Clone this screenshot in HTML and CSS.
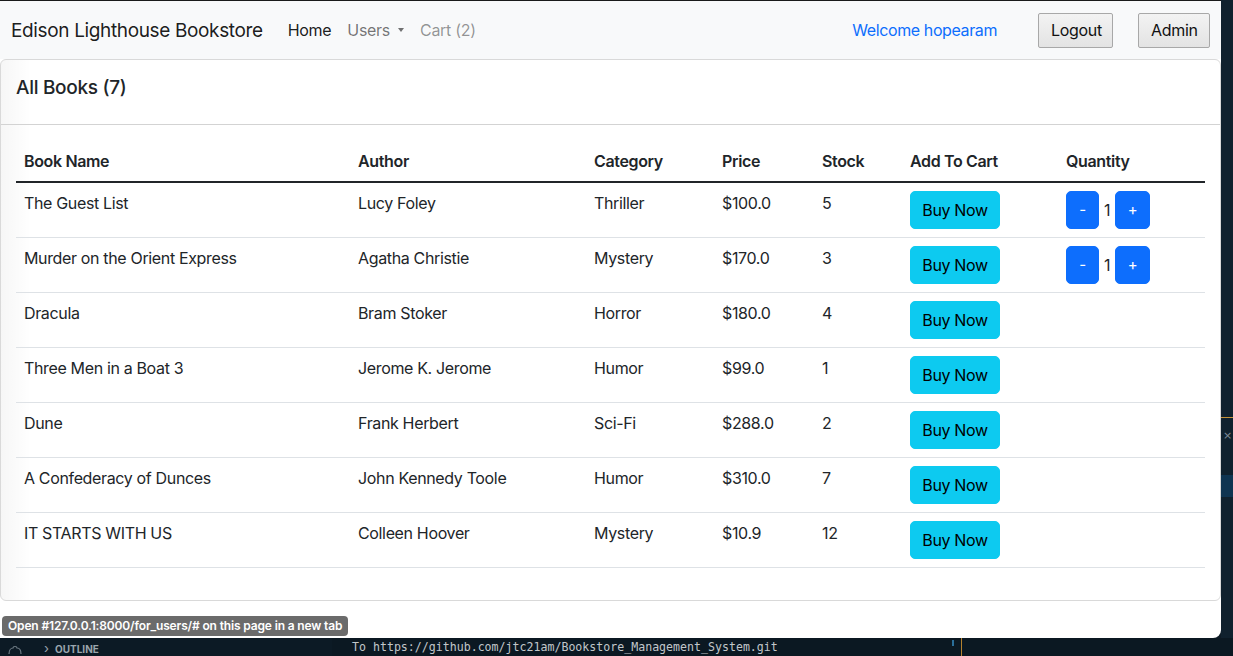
FILE: index.html
```html
<!DOCTYPE html>
<html lang="en">
<head>
<meta charset="utf-8">
<title>Edison Lighthouse Bookstore</title>
<link rel="stylesheet" href="styles.css">
</head>
<body>
<div class="screen">
  <div class="window">
    <nav class="navbar">
      <a class="brand" href="#">Edison Lighthouse Bookstore</a>
      <a class="nav-link active" href="#">Home</a>
      <a class="nav-link" href="#">Users<span class="caret"></span></a>
      <a class="nav-link disabled" href="#">Cart (2)</a>
      <div class="nav-right">
        <a class="welcome" href="#">Welcome hopearam</a>
        <button class="sys-btn logout">Logout</button>
        <button class="sys-btn admin">Admin</button>
      </div>
    </nav>
    <div class="card">
      <div class="card-header"><h5 class="card-title">All Books (7)</h5></div>
      <div class="card-body">
        <table class="table">
          <colgroup>
            <col class="c-name"><col class="c-author"><col class="c-cat"><col class="c-price"><col class="c-stock"><col class="c-cart"><col class="c-qty">
          </colgroup>
          <thead>
            <tr><th>Book Name</th><th>Author</th><th>Category</th><th>Price</th><th>Stock</th><th>Add To Cart</th><th>Quantity</th></tr>
          </thead>
          <tbody>
            <tr><td>The Guest List</td><td>Lucy Foley</td><td>Thriller</td><td>$100.0</td><td>5</td><td><button class="btn btn-info">Buy Now</button></td><td><button class="btn btn-primary">-</button><span class="qty">1</span><button class="btn btn-primary">+</button></td></tr>
            <tr><td>Murder on the Orient Express</td><td>Agatha Christie</td><td>Mystery</td><td>$170.0</td><td>3</td><td><button class="btn btn-info">Buy Now</button></td><td><button class="btn btn-primary">-</button><span class="qty">1</span><button class="btn btn-primary">+</button></td></tr>
            <tr><td>Dracula</td><td>Bram Stoker</td><td>Horror</td><td>$180.0</td><td>4</td><td><button class="btn btn-info">Buy Now</button></td><td></td></tr>
            <tr><td>Three Men in a Boat 3</td><td>Jerome K. Jerome</td><td>Humor</td><td>$99.0</td><td>1</td><td><button class="btn btn-info">Buy Now</button></td><td></td></tr>
            <tr><td>Dune</td><td>Frank Herbert</td><td>Sci-Fi</td><td>$288.0</td><td>2</td><td><button class="btn btn-info">Buy Now</button></td><td></td></tr>
            <tr><td>A Confederacy of Dunces</td><td>John Kennedy Toole</td><td>Humor</td><td>$310.0</td><td>7</td><td><button class="btn btn-info">Buy Now</button></td><td></td></tr>
            <tr><td>IT STARTS WITH US</td><td>Colleen Hoover</td><td>Mystery</td><td>$10.9</td><td>12</td><td><button class="btn btn-info">Buy Now</button></td><td></td></tr>
          </tbody>
        </table>
      </div>
    </div>
    <div class="status-tip">Open #127.0.0.1:8000/for_users/# on this page in a new tab</div>
  </div>
  <div class="side-strip">
    <div class="side-accent"></div>
    <div class="side-close">×</div>
    <div class="side-block"></div>
  </div>
  <div class="bottom-strip">
    <div class="outline-panel">
      <svg class="outline-icon" width="14" height="10" viewBox="0 0 14 10"><path d="M1 9 C1 5 3 3 5 3 C5 1 9 1 9 3 C11 3 13 5 13 9" fill="none" stroke="#6f7c86" stroke-width="1.2"/></svg>
      <span class="chev">›</span>
      <span class="outline-label">OUTLINE</span>
    </div>
    <div class="terminal">
      <span class="term-text">To https://github.com/jtc21am/Bookstore_Management_System.git</span>
      <span class="term-tick"></span>
      <span class="term-line"></span>
    </div>
  </div>
</div>
</body>
</html>
```

FILE: styles.css
```css
* { box-sizing: border-box; }

body {
  margin: 0;
  background: #0e1b26;
  font-family: Inter, "Noto Sans", sans-serif;
  color: #212529;
}

.screen {
  display: grid;
  grid-template-columns: 1221px 12px;
  grid-template-rows: 638px 18px;
  width: 1233px;
  height: 656px;
  overflow: hidden;
}

.window {
  position: relative;
  background: #fff;
  border-bottom-right-radius: 8px;
  overflow: hidden;
}

/* Navbar */
.navbar {
  height: 59px;
  background: #f8f9fa;
  border-top: 1px solid #1a1a1a;
  display: flex;
  align-items: center;
  padding: 0 11px;
}

.navbar a { text-decoration: none; }

.brand {
  font-size: 19px;
  letter-spacing: -0.36px;
  color: rgba(0, 0, 0, 0.9);
  margin-right: 17px;
}

.nav-link {
  padding: 8px;
  font-size: 16px;
  letter-spacing: -0.3px;
  color: rgba(0, 0, 0, 0.55);
  display: flex;
  align-items: center;
}

.nav-link.active { color: rgba(0, 0, 0, 0.9); }
.nav-link.disabled { color: rgba(0, 0, 0, 0.42); }

.caret {
  display: inline-block;
  margin-left: 8px;
  border-top: 4px solid rgba(0, 0, 0, 0.55);
  border-left: 3.5px solid transparent;
  border-right: 3.5px solid transparent;
}

.nav-right {
  margin-left: auto;
  display: flex;
  align-items: center;
}

.welcome {
  color: #0d6efd;
  font-size: 16px;
  letter-spacing: -0.4px;
  margin-right: 41px;
}

.sys-btn {
  height: 35px;
  padding: 0 12px;
  font-family: Inter, "Noto Sans", sans-serif;
  font-size: 16px;
  letter-spacing: -0.3px;
  color: #111;
  border: 1px solid #a8a8a8;
  border-radius: 2px;
  background: linear-gradient(#f3f3f3, #e3e3e3);
}

.logout { width: 75px; margin-right: 25px; }
.admin { width: 72px; }

/* Card */
.card {
  border: 1px solid #d9d9d9;
  border-radius: 6px;
  background: linear-gradient(to right, rgba(0, 0, 0, 0.035), rgba(0, 0, 0, 0) 30px), #fff;
}

.card-header {
  padding: 17px 16px 16px 15px;
  border-bottom: 1px solid #d3d3d3;
}

.card-title {
  margin: 0 0 9px;
  font-size: 19px;
  line-height: 22px;
  font-weight: 500;
  letter-spacing: -0.3px;
}

.card-body { padding: 16px 16px 16px 15px; }

.table {
  width: 1189px;
  border-collapse: collapse;
  table-layout: fixed;
  margin-bottom: 16px;
  font-size: 16px;
  letter-spacing: -0.35px;
}

.c-name { width: 334px; }
.c-author { width: 236px; }
.c-cat { width: 128px; }
.c-price { width: 100px; }
.c-stock { width: 88px; }
.c-cart { width: 156px; }
.c-qty { width: 147px; }

.table th,
.table td {
  padding: 8px;
  line-height: 24px;
  text-align: left;
  vertical-align: top;
}

.table th {
  font-weight: 600;
  border-bottom: 2px solid #212529;
}

.table td { border-bottom: 1px solid #dee2e6; }

.btn {
  height: 38px;
  padding: 6px 12px;
  font-family: Inter, "Noto Sans", sans-serif;
  font-size: 16px;
  line-height: 24px;
  letter-spacing: -0.35px;
  border-radius: 5px;
  border: 1px solid transparent;
  vertical-align: top;
}

.btn-info {
  width: 90px;
  padding: 6px 0;
  background: #0dcaf0;
  border-color: #0dcaf0;
  color: #000;
}

.btn-primary {
  background: #0d6efd;
  border-color: #0d6efd;
  color: #fff;
  font-size: 15px;
  padding: 6px 0;
  width: 33px;
}

.btn-primary + .qty + .btn-primary { width: 35px; }

.qty {
  display: inline-block;
  width: 16px;
  text-align: center;
  line-height: 38px;
}

/* Status tooltip overlay */
.status-tip {
  position: absolute;
  left: 2px;
  top: 616px;
  height: 20px;
  padding: 0 6px;
  background: #6b6b6b;
  color: #fff;
  font-size: 12px;
  font-weight: 600;
  line-height: 20px;
  letter-spacing: -0.15px;
  border-radius: 4px;
  white-space: nowrap;
}

/* Side strip */
.side-strip {
  background: #10212e;
  display: flex;
  flex-direction: column;
}

.side-accent {
  margin-top: 417px;
  height: 1px;
  background: #c4923a;
}

.side-close {
  margin-top: 10px;
  height: 16px;
  color: #7d8b96;
  font-family: "DejaVu Sans", sans-serif;
  font-size: 11px;
  line-height: 16px;
  padding-left: 2px;
}

.side-block {
  margin-top: 31px;
  height: 22px;
  background: #0f3451;
}

/* Bottom strip */
.bottom-strip {
  grid-column: 1 / span 2;
  display: flex;
  background: #0c1a25;
}

.outline-panel {
  width: 332px;
  display: flex;
  align-items: flex-start;
  padding: 3px 0 0 8px;
  color: #9aa5ad;
}

.outline-icon { margin-top: 4px; }

.chev {
  margin-left: 22px;
  font-size: 13px;
  line-height: 14px;
  color: #9aa5ad;
}

.outline-label {
  margin-left: 6px;
  font-size: 10px;
  font-weight: 700;
  line-height: 14px;
  margin-top: 1px;
}

.terminal {
  flex: 1;
  display: flex;
  align-items: flex-start;
  background: #0b1822;
  padding-left: 20px;
}

.term-text {
  width: 600px;
  font-family: "DejaVu Sans Mono", monospace;
  font-size: 11.6px;
  line-height: 14px;
  padding-top: 2px;
  color: #c2c7cb;
  white-space: nowrap;
}

.term-tick {
  width: 2px;
  height: 6px;
  margin-top: 2px;
  background: #2a6e99;
}

.term-line {
  width: 1px;
  height: 18px;
  margin-left: 7px;
  background: #b5822f;
}
```
